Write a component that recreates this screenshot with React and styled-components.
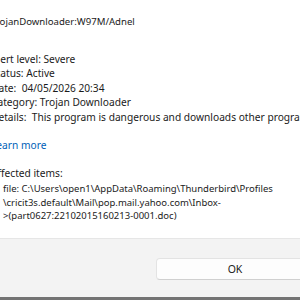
import React from 'react';
import styled, { createGlobalStyle } from 'styled-components';

const GlobalStyle = createGlobalStyle`
  html,
  body {
    margin: 0;
    padding: 0;
    overflow: hidden;
    background: #ffffff;
  }

  body {
    font-family: 'Noto Sans', 'Open Sans', 'Liberation Sans', sans-serif;
    -webkit-font-smoothing: antialiased;
  }
`;

const StyledWindow = styled.div`
  display: flex;
  flex-direction: column;
  width: 300px;
  height: 300px;
  overflow: hidden;
  background: #ffffff;
`;

// the screenshot is cropped, so the text column starts a little off the left edge
const StyledContent = styled.div`
  flex: 1;
  margin-left: -9px;
  padding-top: 15px;
  color: #1b1b1b;
  font-size: 10.2px;
  line-height: 14.6px;
  white-space: nowrap;
`;

const Title = styled.div`
  margin-bottom: 22.1px;
  font-size: 9.6px;
`;

const Field = styled.div``;

const Section = styled.div`
  margin-top: ${({ gap }) => gap}px;
`;

const LearnMore = styled.a`
  color: #005fb8;
  text-decoration: none;
`;

const PathBlock = styled.div`
  margin-top: 1.9px;
  padding-left: 12px;
  font-size: 9.5px;
  line-height: 13.6px;
`;

const Footer = styled.div`
  display: flex;
  justify-content: flex-end;
  align-items: center;
  height: 58px;
  border-top: 1px solid #e6e6e6;
  background: #f3f3f3;
`;

const Button = styled.button`
  width: 158px;
  height: 22px;
  margin-right: -14px;
  margin-top: 2px;
  padding: 0;
  border: 1px solid #e3e3e3;
  border-bottom-color: #d0d0d0;
  border-radius: 4px;
  background: #fdfdfd;
  color: #1b1b1b;
  font-family: inherit;
  font-size: 10.5px;
`;

const TaskStrip = styled.div`
  height: 3px;
  background: #737373;
`;

const App = () => {
  const fields = [
    ['Alert level', 'Severe', ' '],
    ['Status', 'Active', ' '],
    ['Date', '04/05/2026 20:34', '\u00a0 '],
    ['Category', 'Trojan Downloader', ' '],
    ['Details', 'This program is dangerous and downloads other programs.', '\u00a0 '],
  ];

  return (
    <StyledWindow>
      <GlobalStyle />
      <StyledContent>
        <Title>TrojanDownloader:W97M/Adnel</Title>

        {fields.map(([label, value, gap]) => (
          <Field key={label}>
            {label}:{gap}
            {value}
          </Field>
        ))}

        <Section gap={13}>
          <LearnMore href="#">Learn more</LearnMore>
        </Section>

        <Section gap={13.4}>
          Affected items:
          <PathBlock>
            <div>file: C:\Users\open1\AppData\Roaming\Thunderbird\Profiles</div>
            <div>\cricit3s.default\Mail\pop.mail.yahoo.com\Inbox-</div>
            <div>&gt;(part0627:22102015160213-0001.doc)</div>
          </PathBlock>
        </Section>
      </StyledContent>

      <Footer>
        <Button>OK</Button>
      </Footer>
      <TaskStrip />
    </StyledWindow>
  );
};

export default App;
